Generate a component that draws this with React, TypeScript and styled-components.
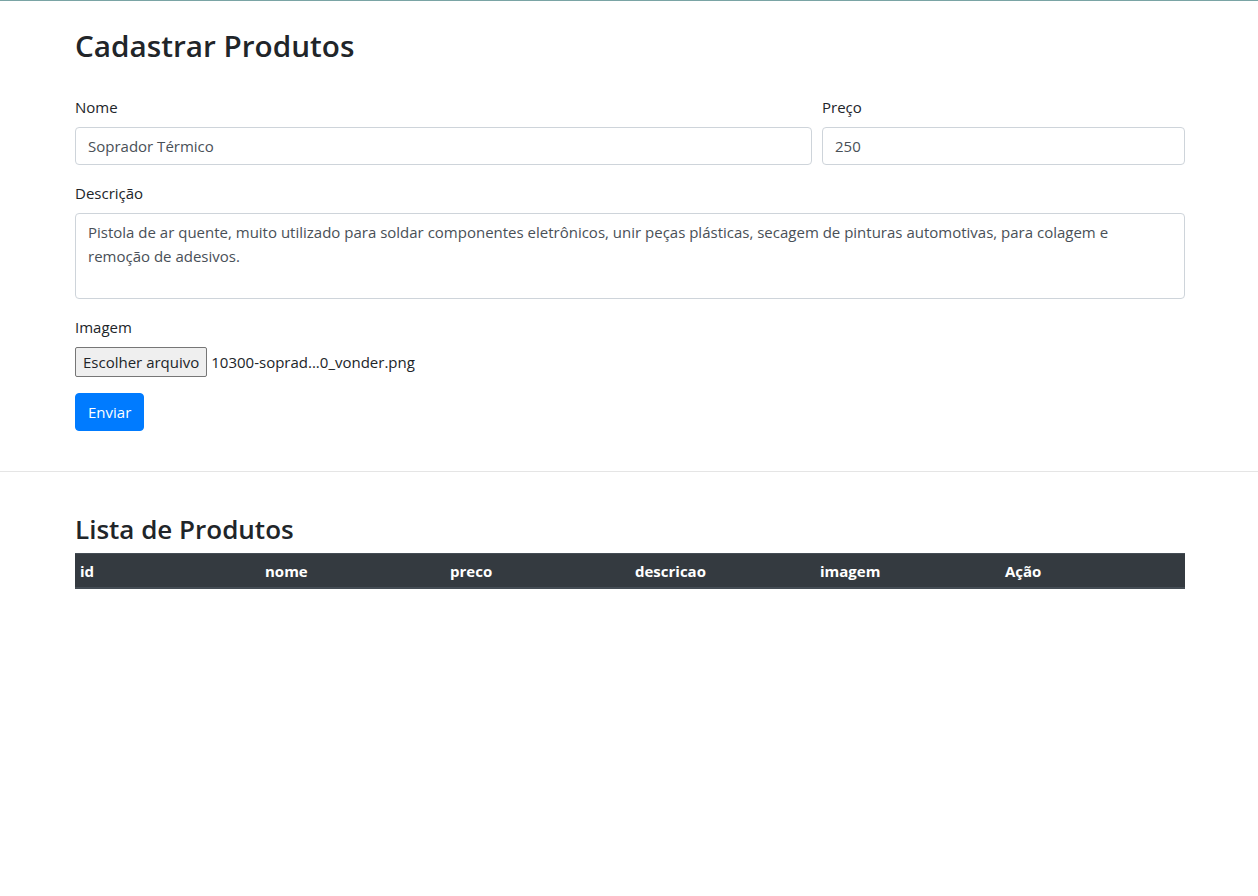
import React from "react";
import styled, { createGlobalStyle } from "styled-components";

const GlobalStyle = createGlobalStyle`
  html, body {
    margin: 0;
    padding: 0;
    background: #fff;
  }
  body {
    font-family: "Open Sans", "Noto Sans", sans-serif;
    font-size: 15px;
    line-height: 24px;
    color: #212529;
    border-top: 1px solid #7aa4a5;
  }
  * {
    box-sizing: border-box;
  }
`;

const columns = ["id", "nome", "preco", "descricao", "imagem", "Ação"];

const descricao =
  "Pistola de ar quente, muito utilizado para soldar componentes eletrônicos, unir peças plásticas, secagem de pinturas automotivas, para colagem e remoção de adesivos.";

const App = () => {
  return (
    <>
      <GlobalStyle />
      <Container>
        <Title>Cadastrar Produtos</Title>
        <form onSubmit={(e) => e.preventDefault()}>
          <Row>
            <FormGroup>
              <Label htmlFor="nome">Nome</Label>
              <Input id="nome" defaultValue="Soprador Térmico" />
            </FormGroup>
            <FormGroup>
              <Label htmlFor="preco">Preço</Label>
              <Input id="preco" defaultValue="250" />
            </FormGroup>
          </Row>
          <FormGroup>
            <Label htmlFor="descricao">Descrição</Label>
            <TextArea id="descricao" rows={3} defaultValue={descricao} />
          </FormGroup>
          <FormGroup>
            <Label>Imagem</Label>
            <FileField>
              <FileButton type="button">Escolher arquivo</FileButton>
              <FileName>10300-soprad...0_vonder.png</FileName>
            </FileField>
          </FormGroup>
          <SubmitButton type="submit">Enviar</SubmitButton>
        </form>
      </Container>
      <Divider />
      <Container>
        <ListTitle>Lista de Produtos</ListTitle>
        <Table>
          <thead>
            <tr>
              {columns.map((c) => (
                <Th key={c}>{c}</Th>
              ))}
            </tr>
          </thead>
          <tbody />
        </Table>
      </Container>
    </>
  );
};

export default App;

const Container = styled.div`
  width: 1110px;
  margin-left: calc(50% - 554px);
  padding: 24px 0;
`;

const Title = styled.h2`
  margin: 0 0 31px;
  padding-top: 2px;
  font-size: 29.7px;
  font-weight: 600;
  line-height: 37.4px;
`;

const ListTitle = styled.h3`
  margin: 0 0 6px;
  padding-top: 1px;
  font-size: 26px;
  font-weight: 600;
  line-height: 33.6px;
`;

const Row = styled.div`
  display: grid;
  grid-template-columns: 737px 1fr;
  column-gap: 10px;
`;

const FormGroup = styled.div`
  margin-bottom: 16px;
`;

const Label = styled.label`
  display: inline-block;
  margin-bottom: 8px;
`;

const fieldStyles = `
  display: block;
  width: 100%;
  padding: 6px 12px;
  font-family: inherit;
  font-size: 15px;
  font-weight: 400;
  line-height: 24px;
  color: #495057;
  background: #fff;
  border: 1px solid #ced4da;
  border-radius: 4px;
  outline: none;
`;

const Input = styled.input`
  ${fieldStyles}
  height: 38px;
`;

const TextArea = styled.textarea`
  ${fieldStyles}
  height: 86px;
  resize: none;
`;

const FileField = styled.div`
  display: flex;
  align-items: center;
  height: 30px;
`;

const FileButton = styled.button`
  height: 30px;
  padding: 0 7px;
  margin-right: 4px;
  font-family: inherit;
  font-size: 15px;
  color: #212529;
  background: #efefef;
  border: 1px solid #767676;
  border-radius: 2px;
`;

const FileName = styled.span`
  font-size: 15px;
`;

const SubmitButton = styled.button`
  height: 38px;
  padding: 6px 12px;
  font-family: inherit;
  font-size: 15px;
  line-height: 24px;
  color: #fff;
  background: #007bff;
  border: 1px solid #007bff;
  border-radius: 4px;
`;

const Divider = styled.hr`
  margin: 16px 0;
  border: 0;
  border-top: 1px solid rgba(0, 0, 0, 0.1);
`;

const Table = styled.table`
  width: 100%;
  border-collapse: collapse;
  table-layout: fixed;
`;

const Th = styled.th`
  padding: 4.5px 5px;
  text-align: left;
  font-weight: 700;
  color: #fff;
  background: #343a40;
  border-top: 1px solid #454d55;
  border-bottom: 2px solid #454d55;
  line-height: 24px;
`;
